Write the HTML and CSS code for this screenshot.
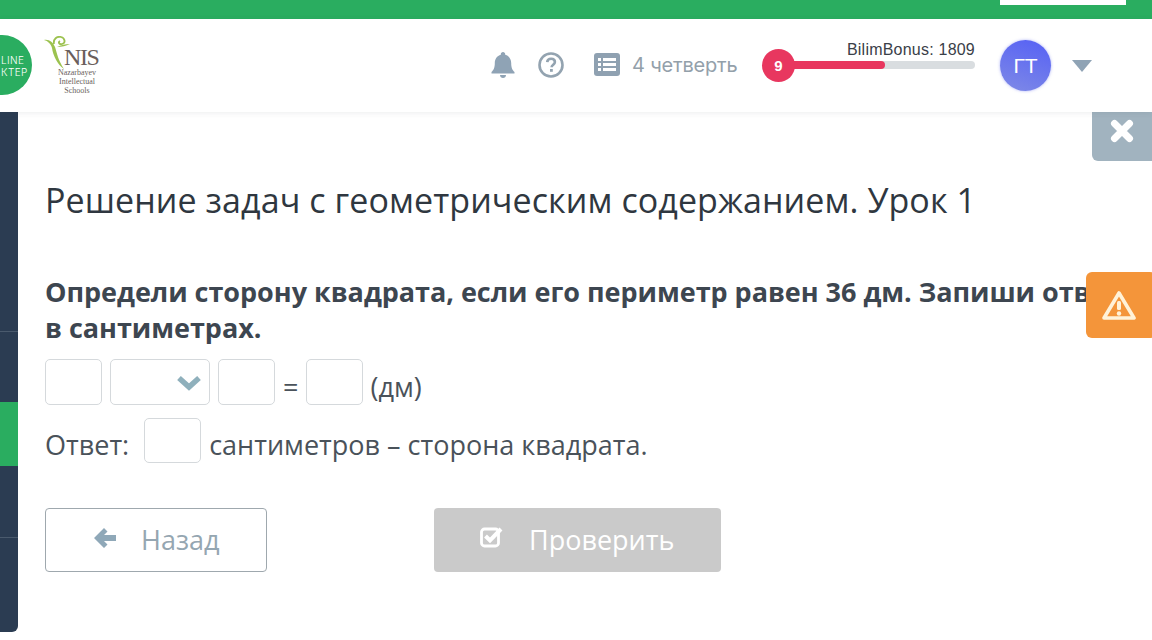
FILE: index.html
```html
<!DOCTYPE html>
<html lang="ru">
<head>
<meta charset="utf-8">
<title>Урок</title>
<link rel="stylesheet" href="styles.css">
</head>
<body>
<div class="page">
  <div class="topbar"><div class="topbar-btn"></div></div>
  <header class="header">
    <div class="logos">
      <div class="ok-logo"><span>LINE</span><span>КТЕР</span></div>
      <div class="nis">
        <svg class="nis-sprout" width="30" height="36" viewBox="0 0 30 36"><path d="M0 4 C5 3 9 6 11 11 C13 17 14 24 20 33 C14 29 9 20 8 12 C7 8 4 5 0 4Z" fill="#9cc24f"/><path d="M10 8 C9 3 13 0 17 1 C21 2 22 7 18 8 C15 9 14 6 16 5" fill="none" stroke="#9cc24f" stroke-width="1.8"/><path d="M13 11 C17 9 21 8 26 8 C22 10 18 11 13 11Z" fill="#9cc24f"/></svg>
        <div class="nis-word">NIS</div>
        <div class="nis-sub">Nazarbayev<br>Intellectual<br>Schools</div>
      </div>
    </div>
    <div class="tools">
      <svg class="bell" width="24" height="26" viewBox="0 0 24 26"><path d="M12 0c1.300 0 2.200 1 2.200 2.200v.6c3.800 1 6 4.300 6 8.200 0 4.700 1 6.800 3.300 9v1.500H.5V20c2.300-2.200 3.300-4.300 3.300-9 0-3.900 2.200-7.200 6-8.200v-.6C9.800 1 10.700 0 12 0z" fill="#8fa3b5"/><path d="M9 23h6c0 1.800-1.300 3-3 3s-3-1.200-3-3z" fill="#8fa3b5"/></svg>
      <svg class="help" width="26" height="26" viewBox="0 0 26 26"><circle cx="13" cy="13" r="11.500" fill="none" stroke="#93a3b0" stroke-width="2.600"/><path d="M9.200 10.200c.2-2.300 1.800-3.400 3.900-3.400 2.200 0 3.800 1.300 3.800 3.200 0 2.600-3.300 2.700-3.300 5.200" fill="none" stroke="#93a3b0" stroke-width="2.600"/><rect x="12" y="17" width="2.800" height="2.800" fill="#93a3b0"/></svg>
      <svg class="list" width="26" height="23" viewBox="0 0 26 23"><rect width="26" height="23" rx="3" fill="#8fa1b1"/><g fill="#fff"><rect x="4" y="5" width="3" height="3"/><rect x="4" y="10" width="3" height="3"/><rect x="4" y="15" width="3" height="3"/><rect x="9" y="5" width="13" height="3"/><rect x="9" y="10" width="13" height="3"/><rect x="9" y="15" width="13" height="3"/></g></svg>
      <span class="quarter">4 четверть</span>
    </div>
    <div class="bonus">
      <div class="bonus-label">BilimBonus: 1809</div>
      <div class="bonus-track"><div class="bonus-fill"></div><div class="bonus-level">9</div></div>
    </div>
    <div class="avatar">ГТ</div>
    <svg class="caret" width="20" height="12" viewBox="0 0 20 12"><path d="M0 0h20L10 12z" fill="#8fa3b5"/></svg>
  </header>
  <div class="body">
    <nav class="sidebar">
      <div class="side-item side-a"></div>
      <div class="side-item side-b"></div>
      <div class="side-item side-active"></div>
      <div class="side-item side-c"></div>
      <div class="side-item side-d"></div>
    </nav>
    <main class="main">
      <h1 class="title">Решение задач с геометрическим содержанием. Урок 1</h1>
      <p class="question">Определи сторону квадрата, если его периметр равен 36 дм. Запиши ответ<br>в сантиметрах.</p>
      <div class="row row-first">
        <div class="box"></div>
        <div class="box box-select"><svg width="26" height="16" viewBox="0 0 26 16"><path d="M3 3l10 9 10-9" fill="none" stroke="#8fb0bc" stroke-width="5.500"/></svg></div>
        <div class="box"></div>
        <span class="row-text eq">=</span>
        <div class="box"></div>
        <span class="row-text unit">(дм)</span>
      </div>
      <div class="row row-second">
        <span class="row-text answer">Ответ:</span>
        <div class="box"></div>
        <span class="row-text">сантиметров – сторона квадрата.</span>
      </div>
      <div class="actions">
        <button class="btn btn-back"><svg width="22" height="20" viewBox="0 0 22 20"><path d="M10 0l3.500 3.500L10 7h12v6H10l3.500 3.500L10 20 0 10z" fill="#8fa8b8"/></svg><span class="btn-label">Назад</span></button>
        <button class="btn btn-check"><svg width="24" height="22" viewBox="0 0 24 22"><rect x="1.500" y="3" width="17" height="17" rx="3" fill="none" stroke="#fff" stroke-width="2.800"/><path d="M5.500 10l4.500 4.500L21 3" fill="none" stroke="#fff" stroke-width="4"/></svg><span class="btn-label">Проверить</span></button>
      </div>
    </main>
    <button class="close"><svg width="24" height="24" viewBox="0 0 24 24"><path d="M4.500 4.500l15 15M19.500 4.500l-15 15" stroke="#fff" stroke-width="7" stroke-linecap="round"/></svg></button>
    <button class="warn"><svg width="34" height="30" viewBox="0 0 34 30"><path d="M17 3L32 28H2z" fill="none" stroke="#fff2d8" stroke-width="3.600" stroke-linejoin="round"/><rect x="15" y="11" width="4" height="9" rx="1.500" fill="#fff2d8"/><circle cx="17" cy="23.500" r="2.200" fill="#fff2d8"/></svg></button>
  </div>
</div>
</body>
</html>
```
FILE: styles.css
```css
* { box-sizing: border-box; }
html, body { margin: 0; padding: 0; }
body { width: 1152px; height: 640px; overflow: hidden; background: #fff; font-family: "Open Sans", sans-serif; color: #3d4650; }
.page { width: 1152px; height: 640px; display: flex; flex-direction: column; overflow: hidden; }

.topbar { height: 19px; flex: none; background: #2aad60; display: flex; justify-content: flex-end; padding-right: 26px; }
.topbar-btn { width: 126px; height: 5px; background: #fff; }

.header { height: 93px; flex: none; display: flex; align-items: center; background: #fff; box-shadow: 0 1px 6px rgba(60,70,80,.09); position: relative; z-index: 2; }
.logos { display: flex; align-items: center; gap: 13px; margin-left: -28px; width: 519px; }
.ok-logo { width: 60px; height: 60px; border-radius: 50%; background: #2aad60; color: #fff; display: flex; flex-direction: column; align-items: flex-end; justify-content: center; font-family: "Inter", sans-serif; font-size: 10px; line-height: 12px; padding: 2px 0 0; font-weight: 300; letter-spacing: .4px; flex: none; margin-top: -2px; }
.ok-logo span { width: 31px; text-align: left; }
.nis { width: 56px; height: 62px; position: relative; text-align: center; color: #6b5f5c; font-family: "Liberation Serif", serif; margin-top: 2px; }
.nis-sprout { position: absolute; left: -1px; top: 0; }
.nis-word { position: absolute; left: 19px; top: 11px; font-size: 24px; line-height: 21px; letter-spacing: -1.4px; }
.nis-sub { position: absolute; left: 13px; top: 32px; width: 38px; font-size: 8px; line-height: 9px; white-space: nowrap; display: flex; flex-direction: column; align-items: center; }

.tools { display: flex; align-items: center; margin-top: -2px; margin-left: 0; }
.bell { margin-right: 23px; }
.help { margin-right: 30px; }
.list { margin-right: 12px; }
.quarter { font-family: "Inter", sans-serif; font-size: 20px; color: #93a0aa; letter-spacing: -.2px; white-space: nowrap; }

.bonus { position: absolute; left: 762px; top: 22px; width: 213px; }
.bonus-label { text-align: right; font-family: "Liberation Sans", sans-serif; font-size: 16px; line-height: 18px; letter-spacing: .22px; color: #3a4048; }
.bonus-track { position: relative; margin-top: 2px; height: 8px; border-radius: 4px; background: #d9dde0; margin-left: 12px; }
.bonus-fill { width: 111px; height: 8px; border-radius: 4px; background: #e8375f; }
.bonus-level { position: absolute; left: -12px; top: -12px; width: 33px; height: 33px; border-radius: 50%; background: #e8375f; color: #fff; font-family: "Liberation Sans", sans-serif; font-weight: 700; font-size: 15px; display: flex; align-items: center; justify-content: center; }

.avatar { position: absolute; left: 1000px; top: 21px; width: 51px; height: 51px; border-radius: 50%; background: linear-gradient(20deg, #7f8ae6, #5560f5); box-shadow: 0 0 3px rgba(90,100,240,.5); color: #fff; display: flex; align-items: center; justify-content: center; font-family: "Liberation Sans", sans-serif; font-size: 21px; }
.caret { position: absolute; left: 1072px; top: 41px; }

.body { flex: 1; position: relative; display: flex; min-height: 0; }
.sidebar { width: 18px; height: 520px; flex: none; background: #2b3c52; border-bottom-right-radius: 6px; display: flex; flex-direction: column; overflow: hidden; }
.side-item { flex: none; }
.side-a { height: 220px; border-bottom: 1px solid #4a5a6d; }
.side-b { height: 70px; }
.side-active { height: 64px; background: #2aad60; }
.side-c { height: 72px; border-bottom: 1px solid #4a5a6d; }

.main { flex: 1; padding: 69px 0 0 27px; min-width: 0; }
.title { margin: 0; font-weight: 400; font-size: 34px; line-height: 38px; letter-spacing: .08px; color: #2f3740; white-space: nowrap; }
.question { margin: 55px 0 0; font-weight: 700; font-size: 27px; line-height: 36px; letter-spacing: -.03px; color: #3d4650; white-space: nowrap; }
.row { display: flex; align-items: center; font-size: 27px; color: #4a525a; }
.row-first { margin-top: 13px; height: 46px; }
.row-second { margin-top: 13px; height: 45px; }
.row-text { padding-top: 8px; white-space: nowrap; }
.box { width: 57px; height: 100%; border: 1px solid #d5d9dc; border-radius: 5px; background: #fff; flex: none; margin-right: 8px; }
.box-select { width: 100px; display: flex; align-items: center; justify-content: flex-end; padding-right: 7px; padding-top: 2px; }
.eq { margin-right: 8px; }
.unit { margin-left: -1px; }
.answer { margin-right: 15px; }
.actions { display: flex; gap: 167px; margin-top: 45px; }
.btn { height: 64px; border-radius: 4px; font-family: "Open Sans", sans-serif; font-size: 27px; display: flex; align-items: center; padding: 0; }
.btn-label { margin-top: -2px; }
.btn-back { width: 222px; background: #fff; border: 1px solid #9fa8ae; color: #95a6b1; padding-left: 48px; }
.btn-back svg { margin-right: 25px; margin-top: -4px; }
.btn-check { width: 287px; background: #cacaca; border: 0; color: #fff; padding-left: 46px; }
.btn-check svg { margin-right: 25px; margin-top: -6px; }

.close { position: absolute; left: 1092px; top: 0; width: 60px; height: 49px; border: 0; border-bottom-left-radius: 6px; background: #a1b3bf; display: flex; align-items: flex-start; padding: 7px 0 0 18px; }
.warn { position: absolute; left: 1086px; top: 160px; width: 70px; height: 66px; border: 0; border-radius: 6px; background: #f4953a; display: flex; align-items: center; padding: 0 0 0 16px; }
```
